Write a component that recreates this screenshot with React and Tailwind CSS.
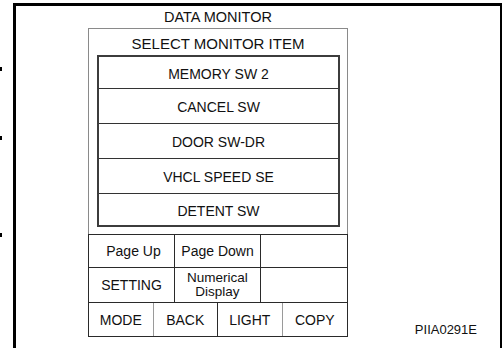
export default function App() {
  const rows = ["MEMORY SW 2", "CANCEL SW", "DOOR SW-DR", "VHCL SPEED SE", "DETENT SW"];
  return (
    <div className="w-[503px] h-[348px] bg-white flex text-[#111] font-['Liberation_Sans',Arial,sans-serif] overflow-hidden">
      <div className="w-[13px] flex flex-col">
        <div className="mt-[67px] h-[4px] w-[2px] bg-black" />
        <div className="mt-[65px] h-[4px] w-[2px] bg-black" />
        <div className="mt-[93px] h-[4px] w-[2px] bg-black" />
      </div>
      <div className="mt-[3px] w-[489px] h-[345px] border-l-[3px] border-t-[3px] border-r-[2px] border-black flex">
        <div className="pl-[72px] flex flex-col w-[332px]">
          <div className="h-[22px] w-[260px] flex items-center justify-center text-[14.5px] leading-none pt-[1px]">
            DATA MONITOR
          </div>
          <div className="w-[260px] border-l border-r border-t border-[#8a8a8a] flex flex-col">
            <div className="h-[26px] flex items-center justify-center text-[15px] leading-none pt-[2px]">
              SELECT MONITOR ITEM
            </div>
            <div className="ml-[8px] w-[243px] h-[172px] border-2 border-[#3c3c3c] flex flex-col">
              {rows.map((r, i) => (
                <div
                  key={r}
                  className={`${i === 0 ? "h-[32px]" : i === 4 ? "flex-1" : "h-[35px]"} ${i < 4 ? "border-b border-[#333]" : ""} flex items-center justify-center text-[14px] leading-none pt-[2px]`}
                >
                  {r}
                </div>
              ))}
            </div>
            <div className="h-[7px]" />
          </div>
          <div className="w-[260px] border border-[#2a2a2a] flex flex-col text-[14px] leading-none">
            <div className="h-[33px] border-b border-[#2a2a2a] grid grid-cols-3">
              <div className="border-r border-[#2a2a2a] flex items-center justify-center pl-[4px]">Page Up</div>
              <div className="border-r border-[#2a2a2a] flex items-center justify-center">Page Down</div>
              <div />
            </div>
            <div className="h-[35px] border-b border-[#2a2a2a] grid grid-cols-3">
              <div className="border-r border-[#2a2a2a] flex items-center justify-center">SETTING</div>
              <div className="border-r border-[#2a2a2a] flex flex-col items-center justify-center text-[13.5px] leading-[14px]">
                <span>Numerical</span>
                <span>Display</span>
              </div>
              <div />
            </div>
            <div className="h-[33px] grid grid-cols-4">
              <div className="border-r border-[#9a9a9a] flex items-center justify-center">MODE</div>
              <div className="border-r border-[#2a2a2a] flex items-center justify-center">BACK</div>
              <div className="border-r border-[#9a9a9a] flex items-center justify-center">LIGHT</div>
              <div className="flex items-center justify-center">COPY</div>
            </div>
          </div>
        </div>
        <div className="flex-1 flex flex-col justify-end items-end pr-[23px] pb-[12px]">
          <span className="text-[13px] leading-none">PIIA0291E</span>
        </div>
      </div>
    </div>
  );
}
